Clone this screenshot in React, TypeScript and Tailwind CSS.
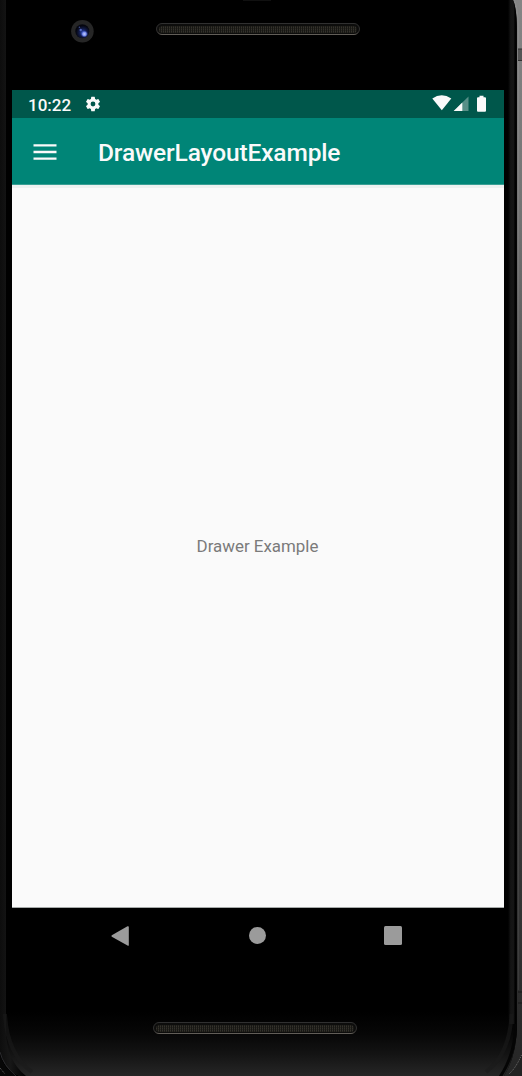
function DeviceFrame() {
  return (
    <svg className="absolute inset-0" width="522" height="1076" viewBox="0 0 522 1076" aria-hidden="true">
      <defs>
        <linearGradient id="side" x1="0" y1="0" x2="0" y2="1">
          <stop offset="0" stopColor="#858585" />
          <stop offset="0.2" stopColor="#737373" />
          <stop offset="0.4" stopColor="#525252" />
          <stop offset="0.6" stopColor="#3c3c3c" />
          <stop offset="0.85" stopColor="#333333" />
          <stop offset="1" stopColor="#262626" />
        </linearGradient>
        <linearGradient id="chin" x1="0" y1="0" x2="0" y2="1">
          <stop offset="0" stopColor="#000000" />
          <stop offset="0.35" stopColor="#070707" />
          <stop offset="0.65" stopColor="#131313" />
          <stop offset="1" stopColor="#262626" />
        </linearGradient>
        <linearGradient id="rim" x1="0" y1="0" x2="1" y2="0">
          <stop offset="0" stopColor="#0d0d0d" />
          <stop offset="0.4" stopColor="#171717" />
          <stop offset="1" stopColor="#000000" />
        </linearGradient>
        <linearGradient id="rimRight" x1="0" y1="0" x2="1" y2="0">
          <stop offset="0" stopColor="#000000" />
          <stop offset="0.3" stopColor="#141414" />
          <stop offset="0.6" stopColor="#161616" />
          <stop offset="0.8" stopColor="#000000" />
          <stop offset="1" stopColor="#060606" />
        </linearGradient>
        <clipPath id="body">
          <path d="M0 0H513Q517 9 517 34V1024Q517 1055 504 1076H20Q3 1070 0 1050Z" />
        </clipPath>
      </defs>
      <rect width="522" height="1076" fill="#000000" />
      <path d="M513 0H522V1076H504Q517 1055 517 1024V34Q517 9 513 0Z" fill="url(#side)" />
      <path d="M514.5 0Q518.5 10 518.5 34V990" fill="none" stroke="#ffffff" strokeOpacity="0.07" />
      <rect x="518" y="49" width="4" height="12" fill="#555555" />
      <path d="M518 49H522M518 60.5H522" stroke="#303030" />
      <path d="M518 992H522M518 1003H522" stroke="#161616" />
      <g clipPath="url(#body)">
        <rect y="1012" width="522" height="64" fill="url(#chin)" />
        <path d="M0 0H6V1030Q6 1060 26 1076H0Z" fill="url(#rim)" />
        <rect x="508" width="9" height="1024" fill="url(#rimRight)" />
        <path d="M5 1014Q7 1054 32 1072M511.5 1014Q510 1054 486 1072" fill="none" stroke="#1b1b1b" strokeWidth="4" opacity="0.6" />
        <path d="M516 1024Q515 1055 500 1077" fill="none" stroke="#050505" strokeWidth="3" />
      </g>
      <path d="M0 1055Q4 1069 16 1076H0Z" fill="#070707" />
      <path d="M0 1052Q3 1065 16 1076" fill="none" stroke="#29292c" />
      <path d="M0 1068L5 1074" stroke="#666666" strokeDasharray="1 1" />
      <path d="M509 1074Q516 1068 522 1054V1076H509Z" fill="#222222" />
      <path d="M509 1074Q516 1068 522 1054" fill="none" stroke="#777777" strokeDasharray="1 1" />
      <path d="M243 0.3H271" stroke="#151515" />
    </svg>
  );
}

function Speaker() {
  return (
    <svg width="206" height="14" viewBox="0 0 206 14" aria-hidden="true">
      <defs>
        <pattern id="mesh" width="2" height="2" patternUnits="userSpaceOnUse">
          <rect width="2" height="2" fill="#171714" />
          <rect width="1" height="2" fill="#34322c" />
          <rect width="1" height="1" fill="#292720" />
        </pattern>
        <linearGradient id="speakerRim" x1="0" y1="0" x2="0" y2="1">
          <stop offset="0" stopColor="#303030" />
          <stop offset="0.7" stopColor="#302f2e" />
          <stop offset="1" stopColor="#625e58" />
        </linearGradient>
      </defs>
      <rect x="1.5" y="1.5" width="203" height="11" rx="5.5" fill="#0d0d0c" stroke="url(#speakerRim)" />
      <rect x="4" y="4" width="198" height="7" rx="3.5" fill="url(#mesh)" />
    </svg>
  );
}

function Camera() {
  return (
    <svg width="24" height="24" viewBox="0 0 24 24" aria-hidden="true">
      <defs>
        <radialGradient id="lens" cx="0.55" cy="0.6" r="0.5">
          <stop offset="0" stopColor="#304cba" />
          <stop offset="0.55" stopColor="#111a47" />
          <stop offset="1" stopColor="#05060f" />
        </radialGradient>
        <radialGradient id="glint">
          <stop offset="0" stopColor="#c4d0ff" />
          <stop offset="0.5" stopColor="#7b8eee" />
          <stop offset="1" stopColor="#263fac" stopOpacity="0" />
        </radialGradient>
      </defs>
      <circle cx="12.4" cy="12.3" r="11.3" fill="#262626" />
      <circle cx="12.3" cy="12.2" r="7" fill="url(#lens)" />
      <circle cx="14.4" cy="15" r="3.7" fill="url(#glint)" />
      <circle cx="10.7" cy="11" r="1.2" fill="#5266bd" />
      <circle cx="9.4" cy="8.2" r="0.8" fill="#3d4b8c" />
    </svg>
  );
}

function StatusBar() {
  return (
    <div className="flex h-7 shrink-0 items-center bg-[#00574b] pl-4 text-[#fafafa]">
      <span className="w-[55px] pt-px text-[17px] leading-7 font-medium">10:22</span>
      <svg className="ml-px" width="18" height="18" viewBox="0 0 24 24" fill="currentColor" aria-hidden="true">
        <path d="M19.14 12.94c.04-.3.06-.61.06-.94s-.02-.64-.07-.94l2.03-1.58a.49.49 0 0 0 .12-.61l-1.92-3.32a.49.49 0 0 0-.59-.22l-2.39.96c-.5-.38-1.03-.7-1.62-.94l-.36-2.54a.48.48 0 0 0-.48-.41h-3.84a.48.48 0 0 0-.47.41l-.36 2.54c-.59.24-1.13.57-1.62.94l-2.39-.96a.48.48 0 0 0-.59.22L2.74 8.87a.48.48 0 0 0 .12.61l2.03 1.58c-.05.3-.09.63-.09.94s.02.64.07.94l-2.03 1.58a.49.49 0 0 0-.12.61l1.92 3.32c.12.22.37.29.59.22l2.39-.96c.5.38 1.03.7 1.62.94l.36 2.54c.05.24.24.41.48.41h3.84c.24 0 .44-.17.47-.41l.36-2.54c.59-.24 1.13-.56 1.62-.94l2.39.96c.22.08.47 0 .59-.22l1.92-3.32a.48.48 0 0 0-.12-.61zM12 15.2A3.2 3.2 0 1 1 12 8.8a3.2 3.2 0 0 1 0 6.4z" />
      </svg>
      <svg className="ml-auto mr-[17px]" width="56" height="20" viewBox="0 0 56 20" fill="currentColor" aria-hidden="true">
        <path d="M1.3 4.6Q10.7-2 20.3 4.6L10.8 16.3Z" />
        <path d="M22.7 17L37.5 2.5V17Z" opacity="0.35" />
        <path d="M22.7 17L31.3 8.5V17Z" />
        <path d="M48.5 1.8H52.5V3.3H54Q55 3.3 55 4.3V16.8Q55 17.8 54 17.8H47Q46 17.8 46 16.8V4.3Q46 3.3 47 3.3H48.5Z" />
      </svg>
    </div>
  );
}

function AppBar() {
  return (
    <header className="flex h-[67px] shrink-0 items-center border-b border-[#399f94] bg-[#008577] pl-[21px] text-[#fafafa]">
      <button type="button" aria-label="Open navigation drawer" className="mr-10 pt-px">
        <svg className="block" width="25" height="18" viewBox="0 0 25 18" fill="none" stroke="currentColor" strokeWidth="2.4" aria-hidden="true">
          <path d="M0.5 2.4H23.5M0.5 9H23.5M0.5 15.6H23.5" />
        </svg>
      </button>
      <h1 className="pt-1 text-[24.5px] leading-8 font-medium tracking-[-0.14px] whitespace-nowrap">DrawerLayoutExample</h1>
    </header>
  );
}

function NavigationBar() {
  return (
    <nav className="flex h-[55px] shrink-0 items-center justify-between pr-[102px] pl-[98px] text-[#9b9b9b]">
      <svg width="20" height="22" viewBox="0 0 20 22" fill="currentColor" aria-hidden="true">
        <path d="M1.8 10.2L17.5 1.3Q18.8.8 18.8 2.1V19.9Q18.8 21.2 17.5 20.5L1.8 11.8Q1 11 1.8 10.2Z" />
      </svg>
      <div className="ml-px size-[17px] rounded-full bg-[#9b9b9b]" />
      <div className="size-[18.5px] rounded-[1.5px] bg-[#9b9b9b]" />
    </nav>
  );
}

export default function App() {
  return (
    <div className="relative h-[1076px] w-[522px] overflow-hidden bg-black font-[Roboto,sans-serif]">
      <DeviceFrame />
      <div className="relative flex h-full flex-col pr-[18px] pl-3">
        <div className="flex h-[90px] shrink-0 items-start pt-[19px] pl-[58px]">
          <Camera />
          <div className="ml-[61px] pt-[3px]">
            <Speaker />
          </div>
        </div>
        <StatusBar />
        <AppBar />
        <main className="flex h-[723px] shrink-0 items-center justify-center border-t-[3px] border-b border-t-[#edf1f0] border-b-[#a6aaa9] bg-[#fafafa] text-[16.9px] text-[#7b7b7b]">
          <span className="-mt-px mr-px">Drawer Example</span>
        </main>
        <NavigationBar />
        <div className="flex pt-[58px] pl-[140px]">
          <Speaker />
        </div>
      </div>
    </div>
  );
}
